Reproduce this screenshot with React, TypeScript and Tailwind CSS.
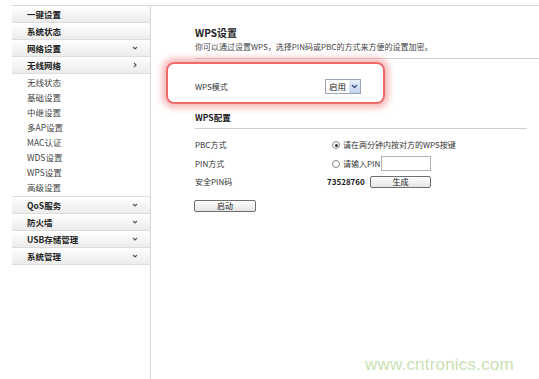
import React from "react";

const font = { fontFamily: '"Noto Sans CJK SC", "DejaVu Sans", sans-serif' };

function Chevron({ dir }: { dir: "down" | "right" }) {
  return (
    <svg width="6" height="6" viewBox="0 0 6 6" className="shrink-0">
      {dir === "down" ? (
        <path d="M1 2 L3 4 L5 2" fill="none" stroke="#555" strokeWidth="1.1" />
      ) : (
        <path d="M2 1 L4 3 L2 5" fill="none" stroke="#555" strokeWidth="1.1" />
      )}
    </svg>
  );
}

function MainItem({ label, chevron }: { label: string; chevron?: "down" | "right" }) {
  return (
    <div className="flex h-[17px] items-center justify-between border-b border-[#dcdcdc] bg-gradient-to-b from-white to-[#ececec] pl-[15px] pr-[12px]">
      <span className="text-[8.5px] font-bold text-[#222]">{label}</span>
      {chevron && <Chevron dir={chevron} />}
    </div>
  );
}

function SubItem({ label }: { label: string }) {
  return (
    <div className="flex h-[15px] items-center pl-[15px] text-[8.5px] text-[#444]">{label}</div>
  );
}

function Radio({ checked }: { checked?: boolean }) {
  return (
    <span className="flex h-[8px] w-[8px] items-center justify-center rounded-full border border-[#888] bg-white">
      {checked && <span className="h-[3px] w-[3px] rounded-full bg-[#333]" />}
    </span>
  );
}

export default function App() {
  return (
    <div className="relative h-[379px] w-[539px] overflow-hidden bg-white" style={font}>
      <div className="flex h-full pt-[5px]">
        <div className="ml-[12px] w-[139px] shrink-0 border-t border-r border-[#d8d8d8]">
          <MainItem label="一键设置" />
          <MainItem label="系统状态" />
          <MainItem label="网络设置" chevron="down" />
          <MainItem label="无线网络" chevron="right" />
          <div className="flex flex-col pt-[1px] pb-[1px]">
            <SubItem label="无线状态" />
            <SubItem label="基础设置" />
            <SubItem label="中继设置" />
            <SubItem label="多AP设置" />
            <SubItem label="MAC认证" />
            <SubItem label="WDS设置" />
            <SubItem label="WPS设置" />
            <SubItem label="高级设置" />
          </div>
          <div className="border-t border-[#dcdcdc]" />
          <MainItem label="QoS服务" chevron="down" />
          <MainItem label="防火墙" chevron="down" />
          <MainItem label="USB存储管理" chevron="down" />
          <MainItem label="系统管理" chevron="down" />
        </div>
        <div className="flex-1 border-t border-[#d8d8d8]">
          <div className="pl-[44px] pt-[21px]">
            <div className="text-[10px] font-bold leading-[12px] text-[#222]">WPS设置</div>
            <div className="mt-[3px] text-[8px] leading-[10px] text-[#444]">
              你可以通过设置WPS，选择PIN码或PBC的方式来方便的设置加密。
            </div>
            <div className="mt-[6px] border-t border-[#cfcfcf]" />
          </div>
          <div className="ml-[15px] mt-[3px] flex h-[42px] w-[219px] items-start rounded-[8px] border-[2px] border-[#ee6a6a] pl-[27px] pt-[15px] shadow-[0_0_6px_4px_rgba(240,100,100,0.45)]">
            <span className="flex h-[15px] w-[130px] items-center text-[8px] text-[#333]">WPS模式</span>
            <div className="flex h-[15px] items-center border border-[#9aa6b5] bg-white pl-[3px]">
              <span className="mr-[3px] text-[8.5px] text-[#222]">启用</span>
              <span className="flex h-[13px] w-[11px] items-center justify-center bg-gradient-to-b from-[#e6eefa] to-[#c4d4ec]">
                <svg width="7" height="5" viewBox="0 0 7 5">
                  <path d="M1 1 L3.5 3.5 L6 1" fill="none" stroke="#35507a" strokeWidth="1.3" />
                </svg>
              </span>
            </div>
          </div>
          <div className="pl-[44px] pt-[8px] pr-[12px]">
            <div className="text-[8.5px] font-bold leading-[10px] text-[#222]">WPS配置</div>
            <div className="mt-[6px] border-t border-[#cfcfcf]" />
            <div className="mt-[10px] flex h-[12px] items-center text-[8px] text-[#333]">
              <span className="w-[137px]">PBC方式</span>
              <Radio checked />
              <span className="ml-[3px]">请在两分钟内按对方的WPS按键</span>
            </div>
            <div className="mt-[6px] flex h-[13px] items-center text-[8px] text-[#333]">
              <span className="w-[137px]">PIN方式</span>
              <Radio />
              <span className="ml-[3px]">请输入PIN</span>
              <span className="ml-[1px] h-[15px] w-[50px] border border-[#b0b0b0] bg-white" />
            </div>
            <div className="mt-[5px] flex h-[13px] items-center text-[8px] text-[#333]">
              <span className="w-[132px]">安全PIN码</span>
              <span className="w-[43px] font-bold text-[#222]">73528760</span>
              <span className="flex h-[12px] w-[61px] items-center justify-center rounded-[2px] border border-[#707070] bg-gradient-to-b from-white to-[#e4e4e4] text-[8px] text-[#222]">
                生成
              </span>
            </div>
            <div className="-ml-[1px] mt-[12px] flex h-[12px] w-[62px] items-center justify-center rounded-[2px] border border-[#707070] bg-gradient-to-b from-white to-[#e4e4e4] text-[8px] text-[#222]">
              启动
            </div>
          </div>
        </div>
      </div>
      <div
        className="absolute left-[365px] top-[352px] text-[17px] tracking-[0.2px] text-[#c9e2b3]"
        style={{ fontFamily: '"Liberation Sans", Arial, sans-serif' }}
      >
        www.cntronics.com
      </div>
    </div>
  );
}
